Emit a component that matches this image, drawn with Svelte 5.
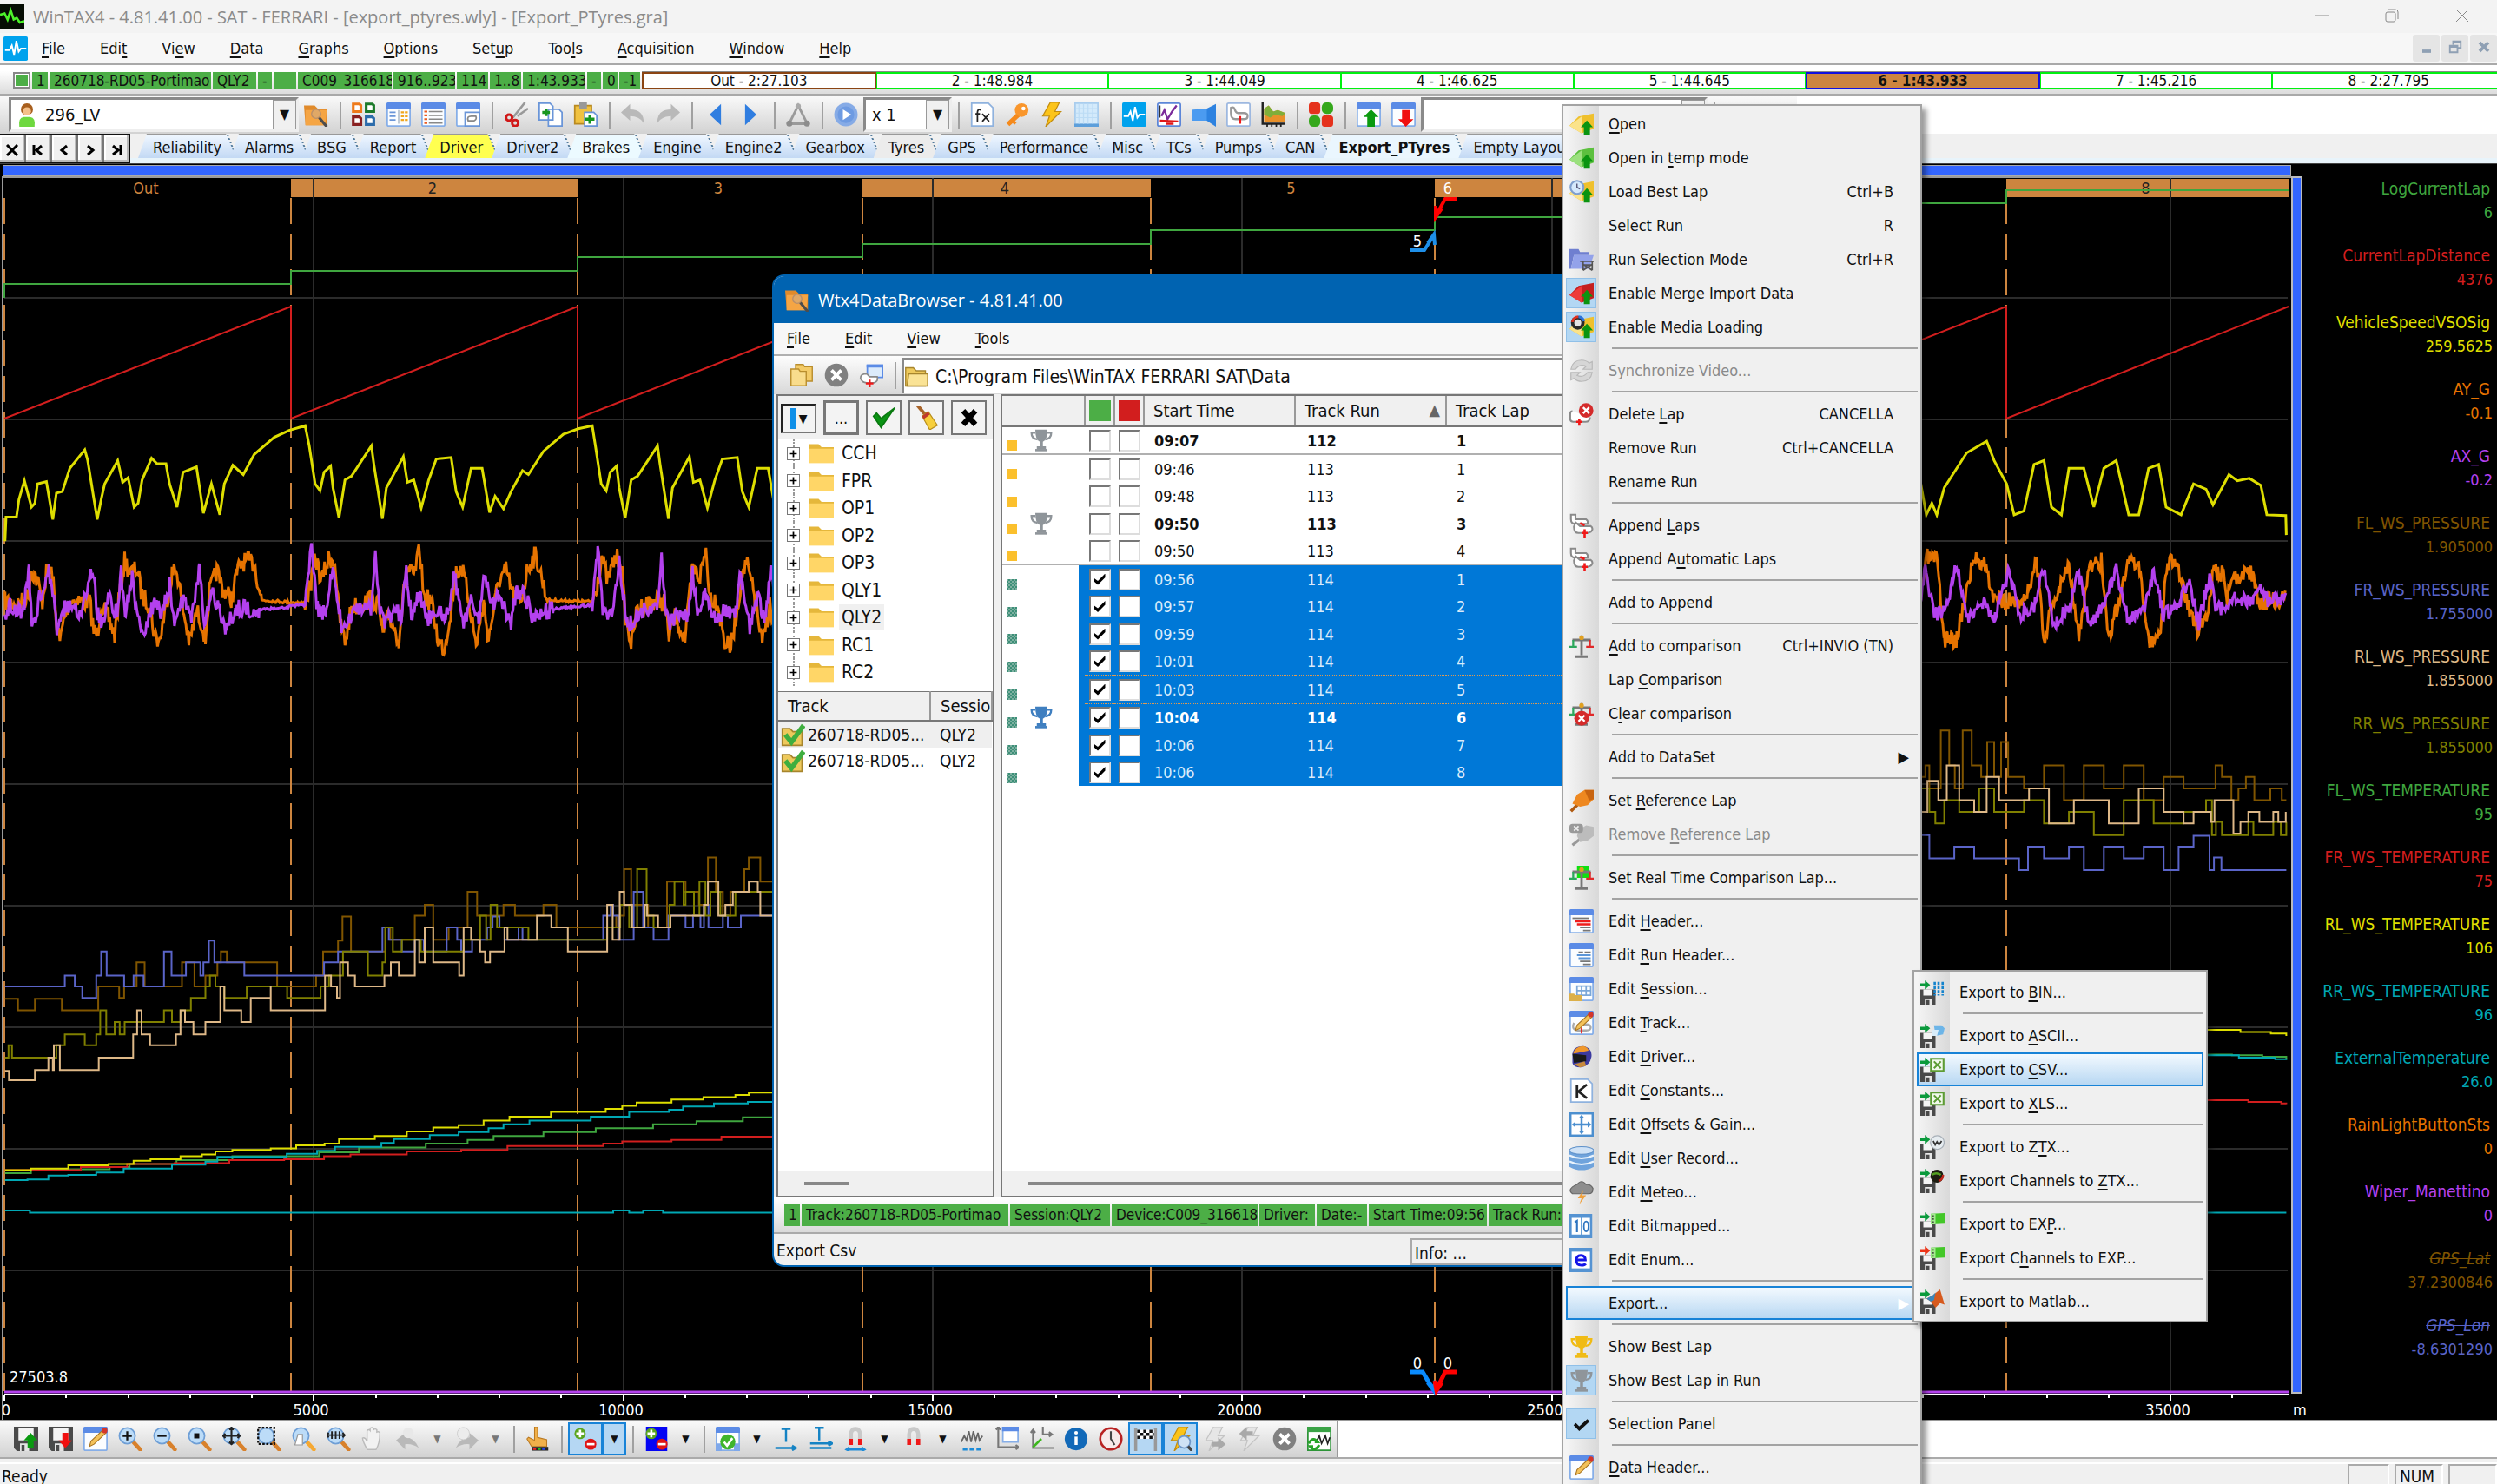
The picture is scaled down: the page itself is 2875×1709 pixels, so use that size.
<script lang="ts">
  type Pt = [number, number];
  type MenuItem = { label: string; icon?: string; keys?: string; off?: boolean; on?: boolean; active?: boolean; sub?: boolean } | null;

  // ---- icons, 16 x 16 ----
  const win = (body = "") =>
    `<rect x=".5" y=".5" width="15" height="15" rx="1" fill="#fbfdff" stroke="#86aee8"/><path d="M0 1q0-1 1-1h14q1 0 1 1v3H0z" fill="#5b8be6"/>${body}`;
  const lens = (body = "", handle = "#d8812c") =>
    `<path d="M9.5 9.500l5 5.500" stroke="${handle}" stroke-width="2.600" stroke-linecap="round"/><circle cx="6" cy="6" r="5.200" fill="#bcdcf8" stroke="#6f9fd6"/>${body}`;
  const disk = (body: string, arrow = "#0a9a3c") =>
    `<path d="M0 6h10v10H0z" fill="#4a4a4a"/><path d="M2 6h6v4H2z" fill="#f4f4f4"/><path d="M3 12h5v4H3z" fill="#e8e8e8"/><path d="M4 13h2v3H4z" fill="#4a4a4a"/><path d="M0 2h3V0l3.500 3L3 6V4H0z" fill="${arrow}"/>${body}`;
  const saveDisk = (arrow: string) =>
    `<path d="M0 0h16v16H2L0 14z" fill="#4a4a4a"/><path d="M3 1h10v8H3z" fill="#f4f4f4"/><path d="M4 11h6v5H4z" fill="#e4e4e4"/><path d="M5 12h2v4H5z" fill="#4a4a4a"/>${arrow}`;
  const greenUp = `<path d="M11.500 5.500l4 4.500h-2v5h-4v-5h-2z" fill="#0a9410"/>`;
  const cube = (light: string, dark: string) => `<path d="M0 9l6-6 10-2v10l-8 3z" fill="${dark}"/><path d="M0 9l8-6v11z" fill="${light}"/>`;
  const track = `<path d="M2 6q-1.500 0-1.500 2v3q0 2 2 2h8q3 0 3-3" fill="#fff" stroke="#8a8a8a" stroke-width="1.200"/>`;
  const scales = `<path d="M8 1v13M4 15h8M2 4h12" stroke="#777" stroke-width="1.600" fill="none"/><circle cx="8" cy="2.500" r="1.500" fill="#e0a020"/><path d="M0 8.500h5M2.500 4v4" stroke="#2ca85c" stroke-width="1.300"/><path d="M11 8.500h5M13.500 4v4" stroke="#e02828" stroke-width="1.300"/>`;
  const cross = (cx: number, cy: number, r: number, fill = "#d42a2a") =>
    `<circle cx="${cx}" cy="${cy}" r="${r}" fill="${fill}"/><path d="M${cx - r / 2.4} ${cy - r / 2.4}l${r / 1.2} ${r / 1.2}m0 ${-r / 1.2}l${-r / 1.2} ${r / 1.2}" stroke="#fff" stroke-width="${r / 3.5}"/>`;
  const cup = (fill: string) =>
    `<path d="M4 1h8q0 7-3 8v3h2v2H5v-2h2V9Q4 8 4 1z" fill="${fill}"/><path d="M4 3H1.500q0 4 4 4.500M12 3h2.500q0 4-4 4.500" stroke="${fill}" stroke-width="1.300" fill="none"/><path d="M4 14.500h8" stroke="${fill}" stroke-width="1.500"/>`;
  const pencil = `<path d="M4 13l1-3.500L13 2l2 2-8 7.500z" fill="#f3c25a" stroke="#a87420" stroke-width=".6"/><circle cx="14" cy="2.500" r="1.800" fill="#d4362a"/>`;
  const magnet = `<path d="M5 12V5q0-3.500 3-3.500T11 5v7" stroke="#c9c9c9" stroke-width="2.600" fill="none"/><path d="M3.700 8h2.600v4H3.700zM9.700 8h2.600v4H9.700z" fill="#f01818"/>`;
  const plusMinus = `<circle cx="4.500" cy="4.500" r="3.700" fill="#5aa51e"/><path d="M4.500 2v5M2 4.500h5" stroke="#fff" stroke-width="1.500"/><circle cx="11.500" cy="11.500" r="3.700" fill="#df1414"/><path d="M9 11.500h5" stroke="#fff" stroke-width="1.500"/>`;
  const bolt = (fill: string, edge: string) => `<path d="M7 0h6L10 6h4L4 16l2.500-7H2z" fill="${fill}" stroke="${edge}" stroke-width=".7"/>`;
  const sheet = (mark: string) => `<path d="M1 .500h11l3 3v12H1z" fill="#fff" stroke="#8fb2de"/>${mark}`;
  const xls = `<path d="M7 .700h8.300v8H7z" fill="#f2f9ec" stroke="#5d9c34" stroke-width="1.200"/><path d="M9 2.500l4.500 4.500M13.500 2.500L9 7" stroke="#5d9c34" stroke-width="1.200"/>`;
  const exp = `<path d="M7 1l9-.500v7L7 8z" fill="#43c728"/><path d="M7 1h3v7H7z" fill="#a5ea90"/><path d="M8.500 2v1m0 1v1m0 1v1" stroke="#333" stroke-width=".8"/>`;

  const icons: Record<string, string> = {
    app: `<rect width="16" height="16" fill="#060d04"/><path d="M0 7l3-1 2 4 2-6 2 6 2-1 2 3 3-1" stroke="#4cf22a" stroke-width="1.500" fill="none"/>`,
    pulse: `<rect width="16" height="16" rx="1" fill="#00a2ed"/><path d="M1 9h3l1.500-3L7 12l1.500-9L10 10l1.500-2H15" stroke="#fff" stroke-width="1.100" fill="none"/>`,
    user: `<circle cx="8" cy="4.500" r="4" fill="#a85f1e"/><circle cx="8" cy="5.800" r="2.700" fill="#f4c08a"/><path d="M3 16q-1-6 3-6.500h4q4 .5 3 6.500z" fill="#6ed83f"/>`,
    opener: `<path d="M0 2h7l2 2h6v11H1z" fill="#e08a2a"/><path d="M1 5h14l-1 10H1z" fill="#f5a544"/><circle cx="8" cy="7.500" r="3" fill="#e0a866" stroke="#b98f6a" stroke-width=".8"/><path d="M10 10l5 6" stroke="#4d4d4d" stroke-width="1.800"/>`,
    four: `<g fill="#fff" stroke-width="1.800"><path d="M1 1h4l1 1v4H1z" stroke="#ee7a1a"/><path d="M9.500 1h4l1 1v4h-5z" stroke="#1c7a2a"/><path d="M1 9.500h4l1 1v4H1z" stroke="#8a2020"/><path d="M9.500 9.500h4l1 1v4h-5z" stroke="#2c6cab"/></g>`,
    cols: win(`<path d="M8 5v9" stroke="#9ab" stroke-width=".7"/><path d="M2 6.500h4M2 9h4M2 11.500h4" stroke="#6a95d8"/><path d="M9.500 6.500h4.500M9.500 9h4.500M9.500 11.500h4.500" stroke="#f0a820" stroke-width="1.400" stroke-dasharray="2 .6"/>`),
    rows: win(`<path d="M5 6h9M5 8.500h9M5 11h9M5 13.500h9" stroke="#888" stroke-width=".9"/><path d="M2 6h2M2 8.500h2M2 11h2M2 13.500h2" stroke="#ec5b20" stroke-width="1.200"/>`),
    winTrack: `${win()}<path d="M6 6.500h9.500v9H6z" fill="#fff" stroke="#6a95d8"/><path d="M8 12q-1-3 2-3h3q1 2-1 3z" fill="none" stroke="#888"/>`,
    cut: `<path d="M14 0L6 10M9 9L16 4" stroke="#999" stroke-width="1.500"/><circle cx="3.500" cy="10" r="2" fill="none" stroke="#d01818" stroke-width="1.700"/><circle cx="7.500" cy="13.500" r="2" fill="none" stroke="#d01818" stroke-width="1.700"/>`,
    copy: `<path d="M.5.500h7l2 2v9h-9zM6.500 4.500h7l2 2v9h-9z" fill="#fff" stroke="#6a95d8"/><path d="M5 4v5M2.500 6.500h5" stroke="#18961f" stroke-width="2"/>`,
    paste: `<path d="M1 2h11v12H1z" fill="#f0c240" stroke="#b98a20"/><path d="M4 0h5v4H4z" fill="#999"/><path d="M7.500 6.500h6l2 2v7h-8z" fill="#fff" stroke="#6a95d8"/><path d="M11 8v6M8 11h6" stroke="#18961f" stroke-width="2"/>`,
    undo: `<path d="M0 6.500L6 1v3.500q9 0 9 9-3-4.500-9-4.500V12z" fill="#b9b9b9"/>`,
    redo: `<path d="M16 6.500L10 1v3.500q-9 0-9 9 3-4.500 9-4.500V12z" fill="#b9b9b9"/>`,
    prev: `<path d="M11.500 1v14L4 8z" fill="#2f7de0"/>`,
    next: `<path d="M4.500 1v14L12 8z" fill="#2f7de0"/>`,
    tri: `<path d="M8 2L2 14h12z" fill="none" stroke="#9a9a9a" stroke-width="1.600"/><circle cx="8" cy="2.500" r="1.800" fill="#aaa"/><circle cx="2.200" cy="13.800" r="2" fill="#8d8d8d"/><circle cx="13.800" cy="13.800" r="2" fill="#8d8d8d"/>`,
    play: `<circle cx="8" cy="8" r="7.700" fill="#86abe6"/><circle cx="8" cy="8" r="5.500" fill="#6e9be2"/><path d="M6 4.500v7L11.500 8z" fill="#fff"/>`,
    fx: sheet(`<path d="M7 5q-2-1-2.200 1.500V13M3.500 7.500h3M8 7.500l4.500 5M12.500 7.500l-4.500 5" stroke="#222" fill="none"/>`),
    key: `<path d="M9 8l-7 6.500" stroke="#f58a1c" stroke-width="3"/><path d="M5 12l2 2" stroke="#f58a1c" stroke-width="2"/><circle cx="11" cy="5" r="4.500" fill="#f9962c"/><circle cx="12.200" cy="4" r="1.300" fill="#fff"/>`,
    bolt: bolt("#fcc419", "#c28c10"),
    mesh: `<rect x=".5" y=".5" width="15" height="14" fill="#d3eafb" stroke="#a9cdee"/><path d="M0 15h16" stroke="#5d9fdb" stroke-width="2"/><path d="M3 1v13M6 1v13M9 1v13M12 1v13M1 4h14M1 7h14M1 10h14" stroke="#bcdcf5" stroke-width=".7"/>`,
    scatter: `<rect x=".5" y=".5" width="15" height="15" rx="1" fill="#fff" stroke="#5c86d8"/><path d="M3 9l2-4 2 6 3-5 3-4" stroke="#7a2a9a" stroke-width="1.300" fill="none"/><path d="M2 12l12 .5M6 14h5" stroke="#e01818" stroke-width="1.400"/><path d="M2 2v8" stroke="#333" stroke-width=".8"/>`,
    area: `<path d="M0 5l10-1 6-3v15l-6-4H0z" fill="#2d82e0"/><path d="M0 5l10-1v8H0z" fill="#4b9bf0"/>`,
    circuit: `<rect x=".5" y=".5" width="15" height="15" rx="1" fill="#fff" stroke="#9db8e0"/><path d="M3 3.500q2-1 2.500 1t2 2.500h4q2.500 0 2.500 2t-2 2H6Q3 11 3 7z" fill="none" stroke="#999" stroke-width="1.300"/><path d="M9 9v5" stroke="#f01818" stroke-width="1.500"/>`,
    histo: `<path d="M1 0v14h15" stroke="#222" stroke-width="1.400" fill="none"/><path d="M2 4l3-2 3 4 3-1 5 2v6H2z" fill="#e8902a"/><path d="M2 4l3-2 3 4 3-1 5 2-2 2-5-1-3 2-4-2z" fill="#7fae3a"/><path d="M4 14v2m3-2v2m3-2v2m3-2v2" stroke="#222"/>`,
    dice: `<rect width="7.500" height="7.500" rx="2" fill="#e5321c"/><rect x="8.500" width="7.500" height="7.500" rx="3" fill="#35a81c"/><rect y="8.500" width="7.500" height="7.500" rx="3" fill="#35a81c"/><rect x="8.500" y="8.500" width="7.500" height="7.500" rx="2" fill="#e5321c"/>`,
    winUp: win(`<path d="M9.500 4.500l5 5H12V16H7V9.500H4.500z" fill="#0a9a10"/>`),
    winDown: win(`<path d="M9.500 16l5-5H12V5H7v6H4.500z" fill="#f01010"/>`),

    cube: cube("#fbe38a", "#efc02c") + greenUp,
    cubeGreen: cube("#9be07e", "#5cc03e") + greenUp,
    best: cube("#fbe38a", "#efc02c") + `<circle cx="5" cy="5" r="4.300" fill="#d5e8fb" stroke="#7f9fce" stroke-width="1.200"/><path d="M5 2.500V5l2 1" stroke="#557" fill="none" stroke-width=".8"/>` + greenUp,
    runSel: `<path d="M0 1h6l1 2h6v2H3L1 14H0z" fill="#6f7fd0"/><path d="M3 5h13l-3 9H1z" fill="#93a2ea"/><path d="M7 9h9M8 11.500h7M9 9v6m6-6v6m-6 0l6-4m-6 0l6 4" stroke="#555" stroke-width="1"/>`,
    merge: cube("#ee3a3a", "#c41f1f") + greenUp,
    media: cube("#fbe38a", "#efc02c") + `<circle cx="5.500" cy="5" r="4.500" fill="#2a2a2a"/><path d="M2 4.500A4 4 0 0 1 6 1" stroke="#e03020" stroke-width="1.700" fill="none"/><path d="M6 1a4 4 0 0 1 3.500 3" stroke="#2d74d8" stroke-width="1.700" fill="none"/><circle cx="5.500" cy="5" r="2.300" fill="#e4e4e4"/>` + greenUp,
    sync: `<path d="M1 7q1-6 7-6 3 0 5 2l2-1v5h-6l2-2q-4-2-7 2zM15 9q-1 6-7 6-3 0-5-2l-2 1V9h6l-2 2q4 2 7-2z" fill="#d6d6d6" stroke="#b9b9b9" stroke-width=".7"/>`,
    delLap: `${track}<path d="M6.500 11v4.500M4.500 13h4" stroke="#f01818" stroke-width="1.500"/>${cross(11, 5.5, 4.8)}`,
    append: `<path d="M1 1h3v3h7q1.500 1 1 3H4Q1 7 1 4z" fill="#fff" stroke="#8a8a8a" stroke-width="1.200"/><path d="M4 6l3 2.500h7q1.500 1 1 2.500t-3 2H6q-3 0-3-4z" fill="#fff" stroke="#8a8a8a" stroke-width="1.200"/><path d="M10 10.500V16M8 13h4M7 6.500l3 1.500" stroke="#f01818" stroke-width="1.500"/>`,
    scales,
    scalesOff: scales + cross(8, 11, 4.8),
    pin: `<path d="M1 15l5-5" stroke="#b05a10" stroke-width="2"/><path d="M5 4l5-3 6 0v6l-4 4-5 1-5-2z" fill="#ee8820"/><path d="M10 1h6v6l-3 1z" fill="#c86410"/>`,
    pinOff: `<path d="M2 15l5-4" stroke="#999" stroke-width="2"/><path d="M6 5l5-3 5 1v6l-4 3-5 1-2-4z" fill="#bcbcbc"/><rect x="0" y="1" width="9" height="6" rx="2" fill="#999"/><path d="M3 2.500l3 3m0-3l-3 3" stroke="#eee"/>`,
    realTime: `<rect x="5" y="0" width="8" height="8" fill="#10e010"/>${scales}`,
    header: win(`<path d="M2 6h11" stroke="#777"/><path d="M4 8h10M5 10h9" stroke="#ee1c1c" stroke-width="1.300"/><path d="M7 12h7M9 14h5" stroke="#777"/>`),
    runHeader: win(`<path d="M6 6h3m1 0h4" stroke="#777"/><path d="M5 8h9M6 10h8" stroke="#5b96d8" stroke-width="1.100"/><path d="M7 12h7M9 14h5" stroke="#777"/>`),
    session: win(`<path d="M5 6h9v6H5zM8 6v6M11 6v6M5 9h9" stroke="#7ba7d8" fill="none"/><path d="M0 11h3l1 1h4v4H0z" fill="#dcb04a"/>`),
    editTrack: win(`<path d="M3 8q-2 4 2 5h6q3 0 3-2t-3-2H8" fill="none" stroke="#aaa" stroke-width="1.300"/><path d="M8 11v4" stroke="#f01818"/>`) + pencil,
    helmet: `<path d="M2 7q0-6 7-6 6 1 5.500 7-1 6-7 7-5 0-5.500-3z" fill="#3c3aa0"/><path d="M2.500 6q1-5 7-5 3 1 3 3z" fill="#f0982c"/><path d="M2 6l9 1v4l-8 1z" fill="#191919"/><path d="M3 13l7-2 1 3-4 1z" fill="#c88a3c"/>`,
    constK: sheet(`<path d="M5 4v9M11.500 4L6 8.500l5.500 4.500" stroke="#222" stroke-width="1.600" fill="none"/>`),
    offsets: `<rect x=".7" y=".7" width="14.600" height="14.600" fill="#fff" stroke="#4c8fcf" stroke-width="1.400"/><path d="M8 3v10M3 8h10" stroke="#4c8fcf" stroke-width="1.400"/><path d="M8 1.500l2 2.500H6zM8 14.500L6 12h4zM1.500 8L4 6v4zM14.500 8L12 10V6z" fill="#4c8fcf"/>`,
    db: `<path d="M0 2.500v11Q8 18 16 13.500v-11z" fill="#6fa3dc"/><path d="M0 6q8 4 16 0M0 10q8 4 16 0" stroke="#eaf3fc" stroke-width="1.200" fill="none"/><ellipse cx="8" cy="2.800" rx="8" ry="2.500" fill="#cfe2f6" stroke="#5c8fc8" stroke-width=".6"/>`,
    meteo: `<path d="M2 9q-3-2 0-4.500Q4 3 5 3q3-4 6 0 3-.5 4.500 2.500 0 3.500-3 3.500z" fill="#8e8e8e" stroke="#666" stroke-width=".7"/><path d="M9 7L5.500 12H8l-1.500 4L11 10H8.500z" fill="#f0a03c"/>`,
    bitmap: `<rect width="15" height="16" fill="#5593d2"/><path d="M1.500 2.500h6v11h-6zM8.500 2.500h5v11h-5z" fill="#fff"/><path d="M3.500 5.500l1.500-1V12" stroke="#2f75c0" stroke-width="1.200" fill="none"/><ellipse cx="11" cy="8.200" rx="1.500" ry="3.300" stroke="#2f75c0" fill="none"/>`,
    enum: `<rect width="15" height="16" fill="#5593d2"/><rect x="1.500" y="2.500" width="12" height="11" fill="#fff"/><path d="M4.500 8h6q0-3-3-3t-3 3.200T8 11.500q2 0 2.700-1" stroke="#1414e8" stroke-width="1.700" fill="none"/>`,
    cup: cup("#f0bb14"),
    cupGrey: cup("#8f959a"),
    cupBlue: cup("#3f7fc0"),
    check: `<path d="M3.500 8l3 3L12.500 5.500" stroke="#111" stroke-width="2.200" fill="none"/>`,
    edit: win() + pencil,

    bin: disk(`<path d="M9.500 1v9M12 1v9M14.700 1v9" stroke="#1583cc" stroke-width="1.500" stroke-dasharray="2 .7"/>`),
    ascii: disk(`<path d="M9 1h5l2 2-1 4-5 1z" fill="#6db5e8"/><path d="M8 4h4l-1 4H8z" fill="#d9edfa"/>`),
    csv: disk(xls),
    ztx: disk(`<circle cx="11.200" cy="5" r="4.500" fill="#e6ecf0" stroke="#a8b0b8" stroke-width=".7"/><path d="M8.500 4l1.300 2.500L11 4.500l1.300 2L14 4" stroke="#333" fill="none"/>`),
    chZtx: disk(`<circle cx="11" cy="4.800" r="4.300" fill="#1d1d10"/><path d="M7.500 4q3-2 6 0" stroke="#54a020" stroke-width="1.300" fill="none"/><path d="M12 8q3-1 3-4" stroke="#c0261a" stroke-width="1.400" fill="none"/>`),
    exp: disk(exp),
    chExp: disk(exp, "#ec3418"),
    matlab: disk(`<path d="M4 6l4-2 5-4 3 10-3-1-3 3-3-4z" fill="#d65a1e"/><path d="M4 6l4-2 2-2-1 5-2 1z" fill="#3c86b8"/>`),

    saveUp: saveDisk(`<path d="M11 4l4.500 5H13v5H9V9H6.500z" fill="#0a9a10"/>`),
    saveDown: saveDisk(`<path d="M11 14l4.500-5H13V4H9v5H6.500z" fill="#f01010"/>`),
    zoomIn: lens(`<path d="M6 3v6M3 6h6" stroke="#111" stroke-width="1.300"/>`),
    zoomOut: lens(`<path d="M3 6h6" stroke="#111" stroke-width="1.300"/>`),
    zoomOne: lens(`<path d="M4.300 4.300h3.400v3.400H4.300z" fill="#111"/>`),
    zoomAll: lens(`<path d="M6 0v12M0 6h12M4.500 2L6 .500 7.500 2M4.500 10L6 11.500 7.500 10M2 4.500L.500 6 2 7.500M10 4.500L11.500 6 10 7.500" stroke="#222" stroke-width="1.200" fill="none"/>`),
    zoomBox: lens(`<rect x=".7" y=".7" width="10.600" height="10.600" fill="none" stroke="#111" stroke-width="1.300" stroke-dasharray="1.500 1"/>`),
    zoomHand: lens(`<path d="M4 5l3 0v7H2z" fill="#fff" stroke="#999" stroke-width=".7"/>`, "#f5a832"),
    zoomX: lens(`<path d="M0 5.500h12M3.500 3v5M6 3v5M8.500 3v5M1.500 4L0 5.500 1.500 7M10.500 4L12 5.500 10.500 7" stroke="#222" stroke-width="1.100" fill="none"/>`),
    hand: `<path d="M4 15Q1 10 .8 7.500q1.500-.8 3 2V2.500q1.300-1 2 0V1q1.300-1 2.200 0v1q1.200-1 2.200 0v1.500q1.300-.7 2 .5 0 7-2.500 11z" fill="#f2f2f2" stroke="#bbb" stroke-width=".8"/>`,
    back: `<path d="M0 9l6-5v3q6 0 9 7-4-3-9-2.500V15z" fill="#b9b9b9"/><circle cx="8" cy="4" r="3.500" fill="#e8e8e8"/>`,
    forth: `<path d="M16 9l-6-5v3q-6 0-9 7 4-3 9-2.500V15z" fill="#b9b9b9"/><circle cx="6" cy="4.500" r="4" fill="#ececec" stroke="#ccc" stroke-width=".5"/>`,
    point: `<path d="M6 0h2v7l6 1.500V13H4L1 8l1-1 4 2z" fill="#f0b04a" stroke="#b97820" stroke-width=".6"/><path d="M4 14.500h11" stroke="#222" stroke-width="2.500"/><path d="M5 14.500h2" stroke="#e22" stroke-width="1.600"/><path d="M8 14.500h2" stroke="#2c2" stroke-width="1.600"/><path d="M11 14.500h2" stroke="#24e" stroke-width="1.600"/>`,
    pm: plusMinus,
    pmBlue: `<rect x="1" y="0" width="14" height="16" fill="#0404f4"/>${plusMinus}`,
    okCal: win(`<path d="M0 11h4v5H0zM12 11h4v5h-4z" fill="#7fa8ea"/><circle cx="8" cy="10" r="5" fill="#3fb52c"/><path d="M5.500 10l2 2.500 3.500-5" stroke="#fff" stroke-width="1.500" fill="none"/>`),
    t1: `<path d="M5 1.500h6M8 1.500V10M1 14h13M12 12.500L14.500 14 12 15.500" stroke="#1583c4" stroke-width="1.400" fill="none"/>`,
    t2: `<path d="M4 .700h6M7 .700V9M1 11h14M1 14h14M13 9.500L15.500 11 13 12.500" stroke="#1583c4" stroke-width="1.400" fill="none"/>`,
    magnet,
    magnetX: magnet + `<path d="M2 15h12M4 13.500L2 15l2 1M12 13.500l2 1.500-2 1" stroke="#1c8bd8" stroke-width="1.300" fill="none"/>`,
    wave: `<path d="M1 10l2-4 1.500 3L6 3l1.500 7L9 3l1.500 6L12 4l1 5 2-3" stroke="#666" fill="none"/><path d="M2 15h12" stroke="#1c8bd8" stroke-width="1.500" stroke-dasharray="3 1.500"/>`,
    axes: `<path d="M2.500 0v13.500H16M1 2l1.500-2L4 2M14 12l2 1.500-2 1.500" stroke="#777" stroke-width="1.200" fill="none"/><path d="M5.500.500h10v9.500h-10z" fill="#fff" stroke="#86aee8"/><path d="M5 0h11v3H5z" fill="#5b8be6"/>`,
    axes2: `<path d="M2.500 2v12H16M1 4l1.500-2L4 4M9 0v5h6M13 3.500L15 5l-2 1.500" stroke="#777" stroke-width="1.200" fill="none"/><path d="M2.500 13.500L8 8" stroke="#3cb81c" stroke-width="1.500"/>`,
    info: `<circle cx="8" cy="8" r="7.500" fill="#1269b8"/><path d="M8 6.500V12" stroke="#fff" stroke-width="2"/><circle cx="8" cy="4" r="1.200" fill="#fff"/>`,
    clock: `<circle cx="8" cy="8" r="7" fill="#f7eaea" stroke="#b82222" stroke-width="1.500"/><path d="M8 3v5l2.500 4" stroke="#444" stroke-width="1.200" fill="none"/>`,
    flag: `<path d="M1.500 1v15M14.500 1v15" stroke="#999" stroke-width="2"/><path d="M2.500 2h11v6h-11z" fill="#fff"/><path d="M2.500 3h11M2.500 7h11" stroke="#111" stroke-width="2" stroke-dasharray="2 2"/><path d="M4.500 5h9" stroke="#111" stroke-width="2" stroke-dasharray="2 2"/>`,
    boltLens: bolt("#fcc419", "#c28c10") + `<circle cx="10.500" cy="10" r="4" fill="#cfe2f5" stroke="#6f97c8"/><path d="M13 13l3 3" stroke="#444" stroke-width="2"/>`,
    boltR: bolt("#e6e6e6", "#c4c4c4") + `<path d="M6 10h4V7l5 4.500-5 4V13H6z" fill="#a9a9a9"/>`,
    boltL: bolt("#e6e6e6", "#c4c4c4") + `<path d="M10 3H6V0L1 4.500 6 9V6h4z" fill="#a9a9a9"/>`,
    stop: cross(8, 8, 7.6, "#808080"),
    monitor: `<rect x=".5" y=".5" width="15" height="15" fill="#fff" stroke="#2d9438"/><path d="M0 0h16v3.500H0z" fill="#3aa346"/><path d="M6 10l2-4 1.500 5L12 6l1.500 5L15 7" stroke="#222" fill="none"/><path d="M1 11q3-5 6-1l-2 0M8 12q-3 5-6 1l2 0" stroke="#28a428" stroke-width="1.700" fill="none"/>`,

    folders: `<path d="M4 1h5l1 1.500h5V12H4z" fill="#f3cb68" stroke="#b98d2c" stroke-width=".8"/><path d="M1 4h5l1 1.500h4V15H1z" fill="#f9dc8c" stroke="#b98d2c" stroke-width=".8"/>`,
    winCar: `<path d="M5.500 1.500h10v8h-10z" fill="#dcebfb" stroke="#5b8be6"/><path d="M5 1h11v2H5z" fill="#5b8be6"/><path d="M5 7Q1 7 1 10q1 3 4 3h5q3-1 2-4H7z" fill="#fff" stroke="#8a8a8a"/><path d="M7 11v5M4.500 13.500h5" stroke="#f01818" stroke-width="1.400"/>`,
    folder: `<path d="M0 2h6l2 2h8v10H0z" fill="#e5b73b"/><path d="M0 5h16v9.500H0z" fill="#ffd667"/>`,
    folderOpen: `<path d="M1 2h5l2 2h6v10H1z" fill="#eec95c" stroke="#a7852c" stroke-width=".8"/><path d="M3 6h12.500v8H2z" fill="#fae396" stroke="#a7852c" stroke-width=".8"/>`,
    tick: `<path d="M1 7l5 7.500L15 1.500 6 8.500 3 5z" fill="#0a9414" stroke="#0a7a10"/>`,
    broom: `<path d="M2 0l5 6" stroke="#a8642a" stroke-width="2.200"/><path d="M5 7l4-3 6 9-5 3z" fill="#f7cf3c" stroke="#b88d1c" stroke-width=".7"/><path d="M5 7l4-3 1 2-4 3z" fill="#c0392b"/>`,
    bigX: `<path d="M4 3.500l8 9M12 3.500l-8 9" stroke="#000" stroke-width="3.500"/>`,
    loaded: `<path d="M1 4h5l2 2h6v9H1z" fill="#eec95c" stroke="#a7852c"/><path d="M3 8l4 5 8-11" stroke="#3fae3f" stroke-width="3.200" fill="none"/>`,
  };

  // ---- chrome data; ^ marks the mnemonic letter ----
  const mainMenu = ["^File", "Edi^t", "Vi^ew", "^Data", "^Graphs", "^Options", "Set^up", "Too^ls", "^Acquisition", "^Window", "^Help"];
  const runCells: [string, number][] = [["1", 18], ["260718-RD05-Portimao", 186], ["QLY2", 50], ["-", 16], ["", 26], ["C009_316618", 108], ["916..923", 71], ["114", 36], ["1..8", 36], ["1:43.933", 72], ["-", 16], ["0", 17], ["-1", 24]];
  const laps = ["Out - 2:27.103", "2 - 1:48.984", "3 - 1:44.049", "4 - 1:46.625", "5 - 1:44.645", "6 - 1:43.933", "7 - 1:45.216", "8 - 2:27.795"];
  const toolsA = ["opener", "|", "four", "cols", "rows", "winTrack", "|", "cut", "copy", "paste", "|", "undo", "redo", "|", "prev", "next", "|", "tri", "|", "play"];
  const toolsB = ["|", "fx", "key", "bolt", "mesh", "|", "pulse", "scatter", "area", "circuit", "histo", "|", "dice", "|", "winUp", "winDown"];
  const toolsC = ["saveUp", "saveDown", "edit", "zoomIn", "zoomOut", "zoomOne", "zoomAll", "zoomBox", "zoomHand", "zoomX", "hand", "back", "v", "forth", "v", "|", "point", "|", "+pm", "+V", "|", "pmBlue", "V", "|", "okCal", "V", "t1", "t2", "magnetX", "V", "magnet", "V", "wave", "axes", "axes2", "info", "clock", "+flag", "+boltLens", "boltR", "boltL", "stop", "monitor"];
  const tabs = ["Reliability", "Alarms", "BSG", "Report", "Driver", "Driver2", "Brakes", "Engine", "Engine2", "Gearbox", "Tyres", "GPS", "Performance", "Misc", "TCs", "Pumps", "CAN", "Export_PTyres", "Empty Layout"];

  const channels: [string, string, string][] = [
    ["LogCurrentLap", "6", "#3fa63f"], ["CurrentLapDistance", "4376", "#d21e1e"], ["VehicleSpeedVSOSig", "259.5625", "#dede00"],
    ["AY_G", "-0.1", "#e67300"], ["AX_G", "-0.2", "#b441ee"], ["FL_WS_PRESSURE", "1.905000", "#805500"],
    ["FR_WS_PRESSURE", "1.755000", "#5a64c8"], ["RL_WS_PRESSURE", "1.855000", "#deb887"], ["RR_WS_PRESSURE", "1.855000", "#808000"],
    ["FL_WS_TEMPERATURE", "95", "#3fa63f"], ["FR_WS_TEMPERATURE", "75", "#d21e1e"], ["RL_WS_TEMPERATURE", "106", "#dede00"],
    ["RR_WS_TEMPERATURE", "96", "#00a8b4"], ["ExternalTemperature", "26.0", "#00a8b4"], ["RainLightButtonSts", "0", "#e67300"],
    ["Wiper_Manettino", "0", "#b441ee"], ["GPS_Lat", "37.2300846", "#805500"], ["GPS_Lon", "-8.6301290", "#5a64c8"],
  ];

  const context: MenuItem[] = [
    { label: "^Open", icon: "cube" }, { label: "Open in ^temp mode", icon: "cubeGreen" }, { label: "Load Best Lap", icon: "best", keys: "Ctrl+B" },
    { label: "Select Run", keys: "R" }, { label: "Run Selection Mode", icon: "runSel", keys: "Ctrl+R" },
    { label: "Enable Merge Import Data", icon: "merge", on: true }, { label: "Enable Media Loading", icon: "media", on: true }, null,
    { label: "Synchronize Video...", icon: "sync", off: true }, null,
    { label: "Delete ^Lap", icon: "delLap", keys: "CANCELLA" }, { label: "Remove Run", keys: "Ctrl+CANCELLA" }, { label: "Rename Run" }, null,
    { label: "Append ^Laps", icon: "append" }, { label: "Append A^utomatic Laps", icon: "append" }, null,
    { label: "Add to Append" }, null,
    { label: "^Add to comparison", icon: "scales", keys: "Ctrl+INVIO (TN)" }, { label: "Lap ^Comparison" }, { label: "C^lear comparison", icon: "scalesOff" }, null,
    { label: "Add to DataSet", sub: true }, null,
    { label: "Set ^Reference Lap", icon: "pin" }, { label: "Remove ^Reference Lap", icon: "pinOff", off: true }, null,
    { label: "Set Real Time Comparison Lap...", icon: "realTime" }, null,
    { label: "Edit ^Header...", icon: "header" }, { label: "Edit ^Run Header...", icon: "runHeader" }, { label: "Edit ^Session...", icon: "session" },
    { label: "Edit ^Track...", icon: "editTrack" }, { label: "Edit ^Driver...", icon: "helmet" }, { label: "Edit ^Constants...", icon: "constK" },
    { label: "Edit ^Offsets & Gain...", icon: "offsets" }, { label: "Edit ^User Record...", icon: "db" }, { label: "Edit ^Meteo...", icon: "meteo" },
    { label: "Edit Bitmapped...", icon: "bitmap" }, { label: "Edit Enum...", icon: "enum" }, null,
    { label: "Export...", active: true, sub: true }, null,
    { label: "Show Best Lap", icon: "cup" }, { label: "Show Best Lap in Run", icon: "cupGrey", on: true }, null,
    { label: "Selection Panel", icon: "check", on: true }, null,
    { label: "^Data Header...", icon: "edit" },
  ];
  const exports: MenuItem[] = [
    { label: "Export to ^BIN...", icon: "bin" }, null,
    { label: "Export to ^ASCII...", icon: "ascii" }, { label: "Export to ^CSV...", icon: "csv", active: true }, { label: "Export to ^XLS...", icon: "csv" }, null,
    { label: "Export to Z^TX...", icon: "ztx" }, { label: "Export Channels to ^ZTX...", icon: "chZtx" }, null,
    { label: "Export to EX^P...", icon: "exp" }, { label: "Export C^hannels to EXP...", icon: "chExp" }, null,
    { label: "Export to Matlab...", icon: "matlab" },
  ];

  const sessions = ["CCH", "FPR", "OP1", "OP2", "OP3", "QLY1", "QLY2", "RC1", "RC2"];
  const rows = [
    ["09:07", "112", "1"], ["09:46", "113", "1"], ["09:48", "113", "2"], ["09:50", "113", "3"], ["09:50", "113", "4"],
    ["09:56", "114", "1"], ["09:57", "114", "2"], ["09:59", "114", "3"], ["10:01", "114", "4"], ["10:03", "114", "5"],
    ["10:04", "114", "6"], ["10:06", "114", "7"], ["10:06", "114", "8"],
  ];
  const bestRows = [0, 3, 10];
  const footCells: [string, number][] = [["1", 18], ["Track:260718-RD05-Portimao", 238], ["Session:QLY2", 115], ["Device:C009_316618", 168], ["Driver:", 64], ["Date:-", 58], ["Start Time:09:56", 136], ["Track Run:114", 120]];

  // ---- graph ----
  const bounds = [5, 335, 665, 993, 1325, 1652, 1981, 2310, 2635];
  const lapNames = ["Out", "2", "3", "4", "5", "", "", "8"];
  const lapY = [327, 312, 296, 281, 265, 250, 234, 219];
  const majors = [0, 1, 2, 3, 4, 5, 6, 7];
  const minors = Array.from({ length: 37 }, (_, i) => i);
  const toX = (x: number) => Math.round(x * 5.74) / 10;
  const toY = (y: number) => 200 + Math.round(y * 8.93) / 10;
  const pairs = (s: string): Pt[] => s.split(" ").map((p) => p.split(",").map(Number) as Pt);
  const shift = (pts: Pt[], dx: number): Pt[] => pts.map(([x, y]) => [x + dx, y]);
  const line = (pts: Pt[]) => "M" + pts.map(([x, y]) => `${toX(x)} ${toY(y)}`).join("L");
  const step = (pts: Pt[]) => pts.map(([x, y], i) => (i ? `H${toX(x)}V${toY(y)}` : `M${toX(x)} ${toY(y)}`)).join("");

  // long spans are straights, where the signal is nearly flat
  const noisy = (pts: Pt[], amp: number, seed: number) => {
    const out: Pt[] = [];
    let s = seed;
    for (let i = 0; i < pts.length - 1; i++) {
      const [x0, y0] = pts[i];
      const [x1, y1] = pts[i + 1];
      const quiet = x1 - x0 > 70 ? 0.15 : 1;
      for (let x = x0; x < x1; x += 2) {
        s = (s * 16807) % 2147483647;
        out.push([x, y0 + ((y1 - y0) * (x - x0)) / (x1 - x0) + (s / 2147483647 - 0.5) * amp * quiet]);
      }
    }
    return out;
  };

  const lapLine = "M5 343" + lapY.map((y, i) => `V${y}H${bounds[i + 1]}`).join("");
  const distLine = "M5 482" + bounds.slice(1).map((x) => `L${x} 353V482`).join("").replace(/V482$/, "");

  const speedOut = pairs("10,474 12,443 33,443 38,420 49,396 63,430 70,425 75,400 93,397 106,446 113,412 125,410 140,380 170,356 176,370 195,446 203,420 210,400 236,370 246,398 257,392 269,430 277,425 285,395 304,367 315,374 333,374 340,400 355,430 367,385 394,378 408,438 424,400 441,440 450,400 467,376 488,388 510,362 550,340 580,331 612,325");
  const speedLap = pairs("620,350 632,400 642,409 650,385 663,377 668,405 680,444 692,395 705,390 745,351 750,375 767,445 775,405 809,365 817,398 830,395 845,431 860,395 875,368 905,366 915,410 928,430 945,380 967,380 982,437 993,416 1010,432 1025,410 1048,383 1060,388 1090,358 1130,336 1160,329 1188,325");
  const speedEnd = pairs("3853,400 3864,440 3875,425 3885,440 3900,405 3915,390 3945,360 3985,345 4000,370 4025,400 4040,440 4060,435 4080,375 4100,370 4115,430 4135,440 4150,380 4180,380 4200,430 4220,380 4245,370 4270,440 4290,440 4310,380 4330,375 4345,430 4375,440 4400,400 4425,407 4439,427 4471,388 4488,396 4512,393 4535,402 4547,440 4585,441 4586,466");
  const ayOut = pairs("10,552 40,555 55,545 63,510 75,525 85,550 93,515 105,515 112,570 120,605 128,575 140,550 180,552 188,590 195,595 203,555 218,575 230,595 240,540 250,500 262,515 275,510 285,545 300,555 310,595 320,603 332,560 345,515 355,510 365,555 380,605 395,565 405,580 412,600 420,540 435,512 450,540 465,548 475,515 487,500 510,502 525,550 612,554");
  const ayLap = pairs("625,525 633,495 645,525 660,495 672,500 680,570 692,605 705,560 740,550 758,552 768,595 780,570 800,600 815,510 830,520 842,485 850,545 865,552 880,605 892,612 905,560 915,515 925,505 940,548 955,608 970,555 980,600 1000,525 1015,512 1030,545 1045,550 1060,505 1075,492 1098,550 1188,552");
  const axOut = pairs("10,580 20,555 45,570 58,515 65,585 80,545 98,515 110,560 115,595 130,560 165,565 180,510 187,515 195,565 205,580 218,545 235,570 243,515 252,570 265,515 275,575 290,590 310,550 325,570 340,530 350,575 370,545 385,575 400,510 410,575 425,540 440,560 452,585 475,560 520,563 612,556");
  const axLap = pairs("625,480 635,560 655,570 668,500 685,585 710,565 745,562 753,495 760,555 770,580 790,565 805,570 815,515 825,570 840,540 855,575 880,565 900,570 912,515 922,560 930,585 945,545 960,575 972,515 985,560 1000,545 1025,580 1035,540 1055,545 1065,570 1110,562 1188,556");
  const ayEnd = pairs("3850,550 3866,495 3885,500 3900,600 3925,600 3940,550 3960,495 3980,500 4000,550 4060,552 4085,500 4100,600 4120,550 4150,500 4170,600 4190,510 4215,500 4230,600 4250,550 4270,500 4290,510 4310,600 4330,600 4350,500 4370,510 4390,560 4410,590 4430,560 4439,515 4460,515 4468,548 4478,520 4515,515 4530,550 4548,552 4586,548");
  const axEnd = pairs("3850,560 3862,510 3880,570 3905,560 3925,500 3945,575 3980,550 4000,575 4030,510 4050,570 4080,560 4100,510 4120,580 4150,560 4170,515 4190,580 4220,560 4245,510 4270,580 4300,560 4320,515 4340,570 4370,560 4390,520 4410,580 4432,520 4445,558 4460,560 4475,548 4520,549 4532,530 4545,550 4586,549");

  const steps: [string, string[]][] = [
    ["#805500", ["10,1064 36,1079 70,1064 124,1079 197,1048 239,1063 249,1048 274,1017 290,1048 365,1017 390,1048 412,1034 436,1017 443,1003 455,1017 556,1048 634,1034 648,1003 678,989 687,958 704,1003 773,972 783,988 832,957 852,943 869,988 900,972 938,926 957,957 1010,943 1033,957 1090,943 1116,972 1236,957 1252,897 1266,943 1300,972 1338,913 1375,926 1402,943 1420,882 1436,926 1450,957 1465,926 1493,897 1502,882 1525,913 1560,913", "3850,778 3862,763 3870,793 3893,718 3910,763 3921,793 3937,718 3955,763 3974,778 3986,733 4000,778 4014,733 4028,778 4060,793 4100,763 4140,808 4180,763 4220,793 4260,763 4300,808 4340,778 4380,793 4425,793 4444,763 4457,778 4476,808 4490,793 4505,778 4522,808 4554,793 4577,808 4586,808"]],
    ["#5a64c8", ["10,1048 130,1034 150,1048 165,1063 193,1034 203,1003 214,1034 249,1048 268,1034 288,1048 329,1003 344,1034 373,1017 402,1034 408,1017 419,989 430,1017 490,1034 650,1017 678,1003 767,972 780,988 806,1003 832,988 850,1003 896,972 917,988 925,1003 947,988 977,972 988,958 1002,972 1012,988 1040,972 1048,988 1210,957 1225,943 1230,957 1240,988 1271,926 1290,972 1311,988 1341,957 1375,972 1390,957 1405,972 1412,943 1421,972 1450,957 1460,972 1486,957 1560,957", "3850,853 3870,883 3920,868 3960,883 4050,898 4068,868 4100,883 4150,868 4180,898 4220,868 4260,883 4300,868 4340,898 4370,868 4400,854 4432,898 4441,882 4456,898 4586,898"]],
    ["#808000", ["10,1140 17,1124 24,1140 113,1124 130,1110 170,1124 193,1110 201,1079 213,1110 230,1094 240,1110 250,1094 329,1079 345,1094 362,1079 383,1063 412,1048 421,1034 432,1048 450,1063 495,1048 576,1063 643,1048 660,1034 688,1003 738,1034 767,1017 773,972 788,1003 806,988 844,1003 930,988 963,957 975,988 984,943 997,972 1060,988 1218,972 1244,943 1262,972 1278,897 1297,957 1311,972 1343,943 1353,913 1371,943 1375,926 1392,957 1403,913 1415,957 1425,926 1445,957 1475,926 1560,926", "3850,793 3870,823 3882,838 3900,808 3930,823 3970,793 4000,823 4060,808 4100,838 4150,823 4200,853 4260,808 4320,838 4380,823 4425,808 4437,853 4445,836 4457,853 4490,853 4510,836 4520,853 4560,836 4575,853 4586,836"]],
    ["#deb887", ["10,1157 18,1169 70,1156 97,1140 106,1156 108,1124 120,1156 198,1140 267,1110 275,1079 284,1110 301,1124 353,1110 362,1079 371,1094 388,1110 412,1094 442,1048 450,1079 484,1094 503,1063 543,1048 543,1079 652,1034 664,1048 676,1063 682,1017 698,1034 712,1048 771,1034 784,1017 800,1034 832,988 841,1017 852,972 869,1017 921,1034 930,972 945,988 963,1003 973,1017 983,1003 1012,972 1018,988 1077,957 1106,972 1139,1003 1218,943 1229,988 1243,926 1252,943 1268,972 1293,943 1298,957 1320,972 1345,957 1412,943 1420,913 1441,957 1455,943 1470,926 1502,913 1520,926 1525,957 1560,957", "3850,823 3866,783 3888,808 3905,763 3930,808 3960,823 3985,778 4010,808 4070,793 4110,838 4160,808 4230,838 4290,793 4340,823 4380,838 4400,823 4435,836 4442,808 4480,851 4494,836 4510,823 4532,836 4560,823 4570,836 4585,823"]],
    ["#3fa63f", ["10,1289 62,1284 220,1281 260,1277 354,1272 466,1267 640,1262 720,1256 854,1251 938,1246 990,1241 1090,1236 1195,1231 1310,1226 1397,1222 1490,1217 1560,1216", "4420,1136 4477,1137 4538,1139 4586,1142"]],
    ["#d21e1e", ["10,1285 162,1281 255,1277 350,1276 460,1272 570,1271 650,1267 703,1265 816,1261 925,1259 1018,1254 1210,1251 1248,1248 1347,1246 1447,1242 1560,1241", "4420,1195 4510,1197 4576,1199 4586,1200"]],
    ["#dede00", ["10,1285 62,1283 137,1279 218,1277 268,1273 302,1271 362,1267 405,1265 432,1261 466,1259 543,1257 594,1253 651,1251 680,1245 752,1241 816,1235 869,1230 920,1227 970,1221 1022,1216 1105,1210 1215,1206 1248,1202 1277,1198 1347,1194 1411,1191 1475,1188 1502,1185 1560,1185", "4420,1104 4494,1107 4555,1109 4586,1112"]],
    ["#00a8b4", ["10,1298 55,1297 97,1292 137,1291 193,1288 248,1283 345,1278 412,1274 436,1268 575,1264 636,1260 672,1255 765,1250 790,1245 862,1240 920,1236 980,1231 1010,1226 1062,1221 1185,1216 1262,1210 1342,1207 1370,1203 1432,1199 1500,1197 1560,1197", "4420,1137 4491,1140 4564,1142 4586,1143", "10,1337 60,1340 1230,1337 1262,1340 1290,1337 1330,1340 4586,1340"]],
  ];
</script>

{#snippet icon(name: string)}
  <svg class="icon" viewBox="0 0 16 16" aria-hidden="true">{@html icons[name]}</svg>
{/snippet}

{#snippet text(label: string)}
  {@const at = label.indexOf("^")}
  {#if at < 0}{label}{:else}{label.slice(0, at)}<u>{label[at + 1]}</u>{label.slice(at + 2)}{/if}
{/snippet}

{#snippet tools(list: string[])}
  {#each list as t}
    {#if t === "|"}
      <span class="sep"></span>
    {:else if t.toLowerCase().endsWith("v") && t.length < 3}
      <button class="drop" class:dim={t === "v"} class:lit={t[0] === "+"} aria-label="more">▼</button>
    {:else}
      {@const name = t.replace("+", "")}
      <button class="tool" class:lit={t[0] === "+"} aria-label={name}>{@render icon(name)}</button>
    {/if}
  {/each}
{/snippet}

{#snippet menu(items: MenuItem[])}
  {#each items as item}
    {#if item}
      <button class="entry" class:active={item.active} disabled={item.off}>
        <span class="gutter" class:on={item.on}>{#if item.icon}{@render icon(item.icon)}{/if}</span>
        <span class="label">{@render text(item.label)}</span>
        {#if item.keys}<span class="keys">{item.keys}</span>{/if}
        {#if item.sub}<span class="arrow">▶</span>{/if}
      </button>
    {:else}
      <hr />
    {/if}
  {/each}
{/snippet}

<div class="app">
  <header class="titlebar">
    {@render icon("app")}
    <h1>WinTAX4 - 4.81.41.00 - SAT - FERRARI - [export_ptyres.wly] - [Export_PTyres.gra]</h1>
    <button aria-label="Minimize"><svg viewBox="0 0 16 16"><path d="M0 8h16" /></svg></button>
    <button aria-label="Restore"><svg viewBox="0 0 16 16"><rect x="1" y="4" width="11" height="11" rx="2" /><path d="M4 1h8q3 0 3 3v8" /></svg></button>
    <button aria-label="Close"><svg viewBox="0 0 16 16"><path d="M1 1l14 14M15 1L1 15" /></svg></button>
  </header>

  <nav class="menubar">
    {@render icon("pulse")}
    {#each mainMenu as m}<button>{@render text(m)}</button>{/each}
    <div class="mdi">
      <button aria-label="Minimize graph"><svg viewBox="0 0 16 16"><path d="M4 12h8" stroke-width="3" /></svg></button>
      <button aria-label="Restore graph"><svg viewBox="0 0 16 16"><path d="M3 7h7v6H3zM3 8h7M6 6V3h7v6h-3M6 4h7" stroke-width="1.500" /></svg></button>
      <button aria-label="Close graph"><svg viewBox="0 0 16 16"><path d="M4 4l8 8M12 4l-8 8" stroke-width="3" /></svg></button>
    </div>
  </nav>

  <section class="laps">
    <span class="marker"></span>
    {#each runCells as [t, w]}<span class="cell" style:width="{w}px">{t}</span>{/each}
    <div class="laplist">
      {#each laps as l, i}<button class:out={i === 0} class:current={i === 5}>{l}</button>{/each}
    </div>
  </section>

  <section class="toolbar">
    <div class="toolset">
      <label class="combo user">
        {@render icon("user")}
        <select aria-label="User layout"><option>296_LV</option></select>
        <span class="down">▼</span>
      </label>
      {@render tools(toolsA)}
      <label class="combo speed">
        <select aria-label="Playback speed"><option>x 1</option></select>
        <span class="down">▼</span>
      </label>
      {@render tools(toolsB)}
      <label class="combo find">
        <select aria-label="Find channel"><option></option></select>
        <span class="down">▼</span>
      </label>
      <span class="sep"></span>
    </div>
  </section>

  <section class="tabs">
    <div class="pager">
      {#each ["M2 2l12 12M14 2L2 14", "M3 2v12M12 3L6 8l6 5", "M11 3L5 8l6 5", "M5 3l6 5-6 5", "M13 2v12M4 3l6 5-6 5"] as d}
        <button aria-label="Page tabs"><svg viewBox="0 0 16 16"><path {d} /></svg></button>
      {/each}
    </div>
    {#each tabs as t}
      <button class="tab" class:driver={t === "Driver"} class:pale={t === "Brakes"} class:plain={t === "Tyres"} class:current={t === "Export_PTyres"}><span>{t}</span></button>
    {/each}
  </section>

  <main class="graph">
    <div class="plot">
      <div class="scroll-x"></div>
      <div class="canvas">
        <svg class="traces" viewBox="0 203 2638 1434">
          <path class="frame" d="M3 1637V204H2638" />
          {#each majors as i}{#if i}<path class="grid" d="M{5 + Math.round(i * 356.3)} 205V1603" />{/if}{/each}
          {#each [343, 483, 623, 763, 903, 1043, 1183, 1323, 1463] as y}<path class="grid" d="M5 {y}H2634" />{/each}
          {#each lapNames as n, i}
            {#if i % 2}<rect x={bounds[i]} y="206" width={bounds[i + 1] - bounds[i]} height="21" fill="#cd853f" />{/if}
            <path class="boundary" d="M{bounds[i]} 228V1602" />
            {#if n}<text class="lap" class:inv={i % 2} x={(bounds[i] + bounds[i + 1]) / 2 - 2} y="223">{n}</text>{/if}
          {/each}
          {#each majors as i}{#if i}<path class="grid" d="M{5 + Math.round(i * 356.3)} 205V228" />{/if}{/each}
          <path d={lapLine} stroke="#3fa63f" />
          <path d={distLine} stroke="#d21e1e" />
          {#each steps as [colour, runs]}{#each runs as r}<path d={step(pairs(r))} stroke={colour} />{/each}{/each}
          <path class="thick" d={line([...speedOut, ...speedLap, ...shift(speedLap, 574)])} stroke="#dede00" />
          <path class="thick" d={line(speedEnd)} stroke="#dede00" />
          <path class="thick" d={line(noisy([...ayOut, ...ayLap, ...shift(ayLap, 574)], 26, 7))} stroke="#e67300" />
          <path class="thick" d={line(noisy([...axOut, ...axLap, ...shift(axLap, 574)], 22, 19))} stroke="#b441ee" />
          <path class="thick" d={line(noisy(ayEnd, 24, 3))} stroke="#e67300" />
          <path class="thick" d={line(noisy(axEnd, 20, 5))} stroke="#b441ee" />
          <path d="M5 1603H2636" stroke="#b441ee" stroke-width="3" />
          <path d="M5 1606H2636" stroke="#fff" />
          {#each minors as i}<path d="M{5 + Math.round(i * 71.26)} 1606v4" stroke="#fff" stroke-width="2" />{/each}
          {#each majors as i}
            <path d="M{5 + Math.round(i * 356.3)} 1606v7" stroke="#fff" stroke-width="2" />
            <text class="axis" x={i ? 2 + Math.round(i * 356.3) : 7} y="1630">{i * 5000}</text>
          {/each}
          <text class="axis start" x="11" y="1592">27503.8</text>
          <text class="axis" x="1632" y="1576">0</text>
          <text class="axis" x="1667" y="1576">0</text>
          <path d="M1624 1580h14l12 20M1644 1592l7 9 2-11" stroke="#0a8cff" stroke-width="5" />
          <path d="M1678 1580h-14l-10 20M1660 1592l-6 9-2-11" stroke="#f00" stroke-width="5" />
          <rect x="1624" y="268" width="18" height="20" fill="#000" />
          <text class="axis" x="1632" y="284">5</text>
          <path d="M1624 288h16l10-16M1644 280l7-10 1 12" stroke="#1e8fe8" stroke-width="4" />
          <text class="axis" x="1667" y="223">6</text>
          <path d="M1678 229h-14l-10 18M1660 240l-7 10v-13" stroke="#f00" stroke-width="4" />
        </svg>
        <div class="scroll-y"></div>
      </div>
    </div>
    <aside class="legend">
      <dl>
        {#each channels as [name, value, colour], i}
          <div style:color={colour}><dt class:lost={i > 15}>{name}</dt><dd>{value}</dd></div>
        {/each}
      </dl>
      <span class="unit">m</span>
    </aside>
  </main>

  <section class="toolbar bottom"><div class="toolset">{@render tools(toolsC)}</div></section>

  <footer class="status"><span>Ready</span><i></i><i class="wide">NUM</i><i class="wide"></i></footer>

  <section class="browser">
    <header>{@render icon("opener")}<h2>Wtx4DataBrowser - 4.81.41.00</h2></header>
    <nav>{#each ["^File", "^Edit", "^View", "^Tools"] as m}<button>{@render text(m)}</button>{/each}</nav>
    <div class="pathbar">
      {#each ["folders", "stop", "winCar"] as t}<button class="tool" aria-label={t}>{@render icon(t)}</button>{/each}
      <span class="sep"></span>
      <label class="path">{@render icon("folderOpen")}<input aria-label="Data path" value="C:\Program Files\WinTAX FERRARI SAT\Data" /></label>
    </div>
    <div class="panes">
      <div class="left">
        <div class="filters">
          <button class="pick" aria-label="Filter"><i></i><b>▼</b></button>
          <button class="dots">...</button>
          <button aria-label="Apply">{@render icon("tick")}</button>
          <button aria-label="Clean">{@render icon("broom")}</button>
          <button aria-label="Clear">{@render icon("bigX")}</button>
        </div>
        <ul class="tree">
          {#each sessions as s}
            <li><button class="plus" aria-label="Expand {s}"><svg viewBox="0 0 15 15"><path d="M3 7.500h9M7.500 3v9" /></svg></button>{@render icon("folder")}<span class:picked={s === "QLY2"}>{s}</span></li>
          {/each}
        </ul>
        <table class="files">
          <thead><tr><th>Track</th><th>Session</th></tr></thead>
          <tbody>
            {#each [0, 1] as r}<tr class:first={r === 0}><td><div>{@render icon("loaded")}260718-RD05...</div></td><td>QLY2</td></tr>{/each}
          </tbody>
        </table>
        <div class="hscroll"><i></i></div>
      </div>
      <div class="right">
        <table class="runs">
          <thead>
            <tr><th class="c-mark"></th><th class="c-box"><i class="green"></i></th><th class="c-box"><i class="red"></i></th><th class="c-col">Start Time</th><th class="c-col"><div>Track Run<b>▲</b></div></th><th>Track Lap</th></tr>
          </thead>
          <tbody>
            {#each rows as r, i}
              <tr class:best={bestRows.includes(i)} class:sel={i > 4} class:focus={i === 9} class:rule={i === 0 || i === 4}>
                <td class="mark"><div><i class:loaded={i > 4}></i>{#if bestRows.includes(i)}{@render icon(i > 4 ? "cupBlue" : "cupGrey")}{/if}</div></td>
                <td class="box"><input type="checkbox" aria-label="Load lap {r[2]} of run {r[1]}" checked={i > 4} /></td>
                <td class="box"><input type="checkbox" aria-label="Compare lap {r[2]} of run {r[1]}" /></td>
                <td>{r[0]}</td><td class="run">{r[1]}</td><td>{r[2]}</td>
              </tr>
            {/each}
          </tbody>
        </table>
        <div class="hscroll long"><i></i></div>
      </div>
    </div>
    <div class="strip">{#each footCells as [t, w]}<span class="cell" style:width="{w}px">{t}</span>{/each}</div>
    <footer><span>Export Csv</span><span class="info">Info: ...</span></footer>
  </section>

  <div class="menu context">{@render menu(context)}</div>
  <div class="menu submenu">{@render menu(exports)}</div>
</div>

<style>
  :global(body) {
    margin: 0;
  }
  .app {
    position: relative;
    display: flex;
    flex-direction: column;
    height: 100vh;
    overflow: hidden;
    background: #f0f0f0;
    color: #111;
    font-family: "DejaVu Sans Condensed", "Noto Sans", sans-serif;
    font-size: 18px;
  }
  button,
  input,
  select {
    margin: 0;
    padding: 0;
    border: 0;
    background: none;
    color: inherit;
    font: inherit;
  }
  u {
    text-underline-offset: 3px;
    text-decoration-thickness: 2px;
  }
  .icon {
    display: block;
    flex: none;
    width: 28px;
    height: 28px;
  }

  .titlebar {
    display: flex;
    flex: none;
    align-items: center;
    height: 38px;
    background: #f3f3f3;
    color: #8a8a8a;
  }
  .titlebar h1 {
    flex: 1;
    margin: 0 0 0 10px;
    font: 400 20px "Open Sans", sans-serif;
  }
  .titlebar button {
    width: 81px;
  }
  .titlebar svg:not(.icon) {
    width: 16px;
    height: 16px;
    fill: none;
    stroke: #888;
  }
  .menubar {
    display: flex;
    flex: none;
    align-items: center;
    height: 35px;
    padding-left: 4px;
    background: #f7f7f7;
    border-bottom: 2px solid #a9a9a9;
  }
  .menubar > button {
    margin-left: 16px;
    padding: 0 12px;
  }
  .menubar > button:first-of-type {
    margin-left: 4px;
  }
  .mdi {
    display: flex;
    gap: 2px;
    margin-left: auto;
  }
  .mdi button {
    width: 31px;
    height: 31px;
    border-radius: 3px;
    background: #e5e5e5;
  }
  .mdi svg {
    width: 20px;
    height: 20px;
    fill: none;
    stroke: #8fa0b4;
  }

  .laps {
    display: flex;
    flex: none;
    align-items: center;
    gap: 2px;
    height: 33px;
    padding: 2px 0 0 15px;
    box-sizing: border-box;
    height: 35px;
    overflow: hidden;
    background: linear-gradient(#fff 20%, #dcdcdc);
    border-bottom: 2px solid #a9a9a9;
    font-size: 17px;
  }
  .marker {
    box-sizing: border-box;
    width: 20px;
    height: 19px;
    border: 2px solid #888;
    outline: 1px solid #fff;
    outline-offset: -3px;
    background: #4cae46;
  }
  .cell {
    box-sizing: border-box;
    flex: none;
    height: 20px;
    padding-left: 5px;
    overflow: hidden;
    background: #4cae46;
    line-height: 20px;
    white-space: nowrap;
  }
  .laplist {
    display: flex;
    flex: 1;
    height: 20px;
    margin-right: -9px;
    border-top: 1px solid #888;
  }
  .laplist button {
    box-sizing: border-box;
    flex: 1;
    border: solid #00f010;
    border-width: 2px 1px;
    background: #fff;
    line-height: 16px;
  }
  .laplist .out {
    border-color: #8b4513;
    border-width: 2px;
  }
  .laplist .current {
    border: 2px solid #1010e0;
    background: #cd853f;
    font-weight: 700;
  }

  .toolbar {
    display: flex;
    flex: none;
    height: 44px;
    background: #fff;
  }
  .toolset {
    display: flex;
    align-items: center;
    background: linear-gradient(#fafafa, #d2d2d2);
  }
  .toolbar:not(.bottom) .toolset {
    padding: 0 88px 0 10px;
  }
  .tool {
    display: flex;
    flex: none;
    align-items: center;
    justify-content: center;
    width: 40px;
    height: 38px;
  }
  .sep {
    flex: none;
    box-sizing: border-box;
    width: 15px;
    height: 31px;
    border-right: 6px solid transparent;
    border-left: 7px solid transparent;
    background: #a0a0a0;
    background-clip: padding-box;
  }
  .drop {
    width: 27px;
    height: 38px;
    font-size: 12px;
  }
  .drop.dim {
    color: #777;
  }
  .tool.lit,
  .drop.lit {
    background: #b5d7f3;
    box-shadow: inset 0 0 0 2px #1883d7;
  }
  .combo {
    box-sizing: border-box;
    display: flex;
    align-items: center;
    height: 40px;
    border: 3px solid #8a8a8a;
    border-right-color: #eee;
    border-bottom-color: #eee;
    background: #fff;
  }
  .combo .icon {
    margin-left: 4px;
  }
  .combo select {
    flex: 1;
    min-width: 0;
    padding-left: 7px;
    appearance: none;
    font-size: 20px;
  }
  .down {
    width: 25px;
    background: #f0f0f0;
    border: 1px solid #999;
    font-size: 16px;
    line-height: 32px;
    text-align: center;
  }
  .combo.user { width: 334px; }
  .combo.speed { width: 102px; }
  .combo.find { width: 330px; }
  .toolbar.bottom {
    border-top: 1px solid #999;
    border-bottom: 2px solid #aaa;
    height: 42px;
    margin-bottom: 4px;
  }
  .toolbar.bottom .toolset {
    padding: 0 0 0 10px;
    border-right: 2px solid #999;
  }

  .tabs {
    display: flex;
    flex: none;
    height: 34px;
    background: linear-gradient(#f0f0f0 28px, #e8f4fb 28px);
    border-bottom: 1px solid #444;
  }
  .pager {
    display: flex;
    flex: none;
    margin-right: 12px;
    border: solid #111;
    border-width: 2px 2px 2px 0;
    background: #777;
    gap: 2px;
  }
  .pager button {
    width: 28px;
    background: #f0f0f0;
    box-shadow: inset -2px -2px #bbb, inset 2px 2px #fff;
  }
  .pager svg {
    width: 16px;
    height: 16px;
    fill: none;
    stroke: #000;
    stroke-width: 3;
    vertical-align: middle;
  }
  .tab {
    --fill: linear-gradient(#eef6ff, #c3d9f4);
    position: relative;
    flex: none;
    height: 28px;
    padding: 3px 13px 0 14px;
  }
  .tab::before {
    content: "";
    position: absolute;
    inset: 0 -6px 0 -3px;
    border-top: 2px solid #999;
    background: var(--fill);
    clip-path: polygon(10px 0, calc(100% - 14px) 0, 100% 100%, 0 100%);
  }
  .tab::after {
    content: "";
    position: absolute;
    top: 1px;
    right: 0;
    height: 26px;
    border-right: 2px dotted #557c9c;
    transform: skewX(22deg);
  }
  .tab span {
    position: relative;
  }
  .tab.driver { --fill: #ffff50; }
  .tab.pale { --fill: #ecfaff; }
  .tab.plain { --fill: #ececec; }
  .tab.current { --fill: #eaf6fe; font-weight: 700; }

  .graph {
    display: grid;
    grid-template-columns: minmax(0, 1fr) 224px;
    flex: 1;
    min-height: 0;
    align-items: start;
    padding-top: 1px;
    background: #000;
  }
  .scroll-x {
    height: 10px;
    margin: 0 13px 0 3px;
    border: solid #aaa;
    border-width: 1px 1px 2px;
    background: #3366ff;
  }
  .canvas {
    display: flex;
  }
  .traces {
    flex: 1;
    min-width: 0;
    fill: none;
    stroke-width: 2;
  }
  .traces .frame { stroke: #9a9a9a; }
  .traces .grid { stroke: #2b2b2b; }
  .traces .boundary { stroke: #cd853f; stroke-dasharray: 30 11; }
  .traces .thick { stroke-width: 3; }
  .traces text {
    fill: #fff;
    font-size: 18px;
    text-anchor: middle;
  }
  .traces .start { text-anchor: start; }
  .traces .lap { fill: #cd853f; }
  .traces .inv { fill: #222; }
  .scroll-y {
    width: 9px;
    margin-bottom: 32px;
    border: 2px solid #bbb;
    background: #3366ff;
  }
  .legend {
    display: flex;
    flex-direction: column;
    justify-content: space-between;
    height: 100%;
  }
  .legend dl {
    margin: 13px 5px 0 0;
    text-align: right;
  }
  .legend dl div {
    margin-bottom: 21px;
    line-height: 28px;
  }
  .legend dt {
    padding-right: 3px;
    font-size: 19px;
  }
  .legend dd {
    margin: 0;
  }
  .legend .lost {
    font-style: italic;
    text-decoration: line-through;
  }
  .unit {
    margin-left: -11px;
    color: #fff;
    line-height: 26px;
  }

  .status {
    display: flex;
    flex: none;
    height: 23px;
    overflow: hidden;
    border-top: 2px solid #fff;
    font-size: 19px;
    line-height: 28px;
  }
  .status span {
    flex: 1;
    padding-left: 2px;
  }
  .status i {
    box-sizing: border-box;
    width: 48px;
    margin-right: 6px;
    padding-left: 4px;
    border: 2px solid #aaa;
    border-right-color: #fff;
    border-bottom: 0;
    font-style: normal;
    line-height: 24px;
  }
  .status .wide {
    width: 56px;
  }
  .status .wide:last-child {
    margin-right: 0;
  }

  .browser {
    position: absolute;
    top: 316px;
    left: 889px;
    box-sizing: border-box;
    display: flex;
    flex-direction: column;
    width: 1000px;
    height: 1143px;
    overflow: hidden;
    border: 2px solid #0063b1;
    border-radius: 14px;
    background: #f0f0f0;
  }
  .browser > header {
    display: flex;
    flex: none;
    align-items: center;
    gap: 10px;
    height: 54px;
    padding-left: 13px;
    background: #0063b1;
    color: #fff;
  }
  .browser h2 {
    margin: 0;
    font: 400 20px "Open Sans", sans-serif;
  }
  .browser nav {
    flex: none;
    height: 36px;
    padding-left: 3px;
    background: #f7f7f7;
    border-bottom: 2px solid #b0b0b0;
  }
  .browser nav button {
    margin-right: 16px;
    padding: 0 12px;
    line-height: 36px;
  }
  .pathbar {
    display: flex;
    flex: none;
    align-items: center;
    height: 44px;
    padding-left: 12px;
    background: linear-gradient(#fdfdfd, #d8d8d8);
  }
  .path {
    display: flex;
    flex: 1;
    align-items: center;
    height: 38px;
    border-top: 3px solid #8a8a8a;
    border-left: 3px solid #8a8a8a;
    background: #fff;
  }
  .path input {
    flex: 1;
    padding-left: 8px;
    font-size: 21px;
  }
  .panes {
    display: flex;
    flex: 1;
    min-height: 0;
  }
  .left,
  .right {
    display: flex;
    flex-direction: column;
    border: 2px solid #777;
    background: #fff;
  }
  .left {
    width: 247px;
    margin: 0 7px 0 3px;
  }
  .right {
    flex: 1;
  }
  .filters {
    display: flex;
    gap: 8px;
    padding: 5px 3px;
    background: #f0f0f0;
  }
  .filters button {
    box-sizing: border-box;
    display: flex;
    align-items: center;
    justify-content: center;
    width: 41px;
    height: 40px;
    border: 2px solid #777;
    background: #f3f3f3;
  }
  .filters .pick {
    height: 34px;
    margin-top: 4px;
    border-style: inset;
  }
  .pick i {
    width: 6px;
    height: 24px;
    margin-right: 4px;
    background: #1090e8;
  }
  .pick b {
    font-size: 14px;
  }
  .filters .dots {
    border-width: 3px;
  }
  .tree {
    margin: 0;
    padding: 0 0 0 10px;
    list-style: none;
    font-size: 21px;
  }
  .tree li {
    position: relative;
    display: flex;
    align-items: center;
    height: 31px;
  }
  .tree li:nth-child(odd) {
    height: 32px;
  }
  .tree li::before {
    content: "";
    position: absolute;
    top: 0;
    bottom: 0;
    left: 7px;
    border-left: 2px dotted #999;
  }
  .plus {
    position: relative;
    display: flex;
    width: 15px;
    height: 15px;
    margin-right: 11px;
    border: 1px solid #777;
    background: #fff;
  }
  .plus svg {
    stroke: #000;
    stroke-width: 2;
  }
  .tree span {
    margin-left: 6px;
    padding: 0 3px;
    line-height: 30px;
  }
  .picked {
    background: #f0f0f0;
  }
  table {
    border-collapse: collapse;
    table-layout: fixed;
    width: 100%;
  }
  th {
    height: 32px;
    padding: 0 0 0 11px;
    overflow: hidden;
    border-right: 2px solid #999;
    border-bottom: 2px solid #777;
    background: #f0f0f0;
    font-size: 20px;
    font-weight: 400;
    text-align: left;
    white-space: nowrap;
  }
  td {
    padding: 0;
    white-space: nowrap;
  }
  .files {
    margin-top: 6px;
    border-top: 1px solid #777;
    font-size: 19px;
  }
  .files th:first-child {
    width: 163px;
  }
  .files td {
    height: 30px;
    overflow: hidden;
  }
  .files td:last-child {
    padding-left: 11px;
  }
  .files .first {
    background: #efefef;
  }
  .files td div {
    display: flex;
    align-items: center;
    gap: 3px;
    padding-left: 3px;
  }
  .hscroll {
    height: 29px;
    margin-top: auto;
    background: #f0f0f0;
  }
  .hscroll i {
    display: block;
    width: 52px;
    height: 4px;
    margin: 13px 0 0 30px;
    background: #888;
  }
  .hscroll.long i {
    width: 700px;
  }
  .runs .c-mark { width: 84px; }
  .runs .c-box { width: 32px; padding: 0; }
  .runs .c-col { width: 162px; }
  .runs th {
    height: 34px;
    padding-left: 10px;
  }
  .runs th i {
    display: block;
    width: 25px;
    height: 24px;
    margin: auto;
  }
  .runs th .green { background: #4cae46; }
  .runs th .red { background: #d21e1e; }
  .runs th div {
    display: flex;
    justify-content: space-between;
    padding-right: 6px;
  }
  .runs th b {
    color: #666;
    font-size: 18px;
  }
  .runs tbody td {
    height: 31px;
    padding-left: 12px;
  }
  .runs tbody tr:nth-child(even) td {
    height: 32px;
  }
  .runs tbody .rule td {
    height: 30px;
  }
  .runs tbody .focus td {
    height: 30px;
  }
  .runs tbody .box {
    padding: 0;
    text-align: center;
  }
  .runs tbody .run {
    padding-left: 14px;
  }
  .runs input {
    position: relative;
    box-sizing: border-box;
    width: 25px;
    height: 25px;
    appearance: none;
    background: #fff;
    border: 2px solid #777;
    border-right-color: #ddd;
    border-bottom-color: #ddd;
    vertical-align: middle;
  }
  .runs input:checked::before {
    content: "";
    position: absolute;
    inset: 4px;
    background: #000;
    clip-path: polygon(0 40%, 35% 65%, 100% 0, 100% 35%, 35% 100%, 0 70%);
  }
  .runs tbody .mark {
    padding-left: 5px;
  }
  .mark div {
    display: flex;
    align-items: center;
    gap: 14px;
    height: 30px;
  }
  .mark i {
    align-self: flex-end;
    width: 12px;
    height: 12px;
    margin-bottom: 3px;
    background: #fbc02d;
  }
  .mark i.loaded {
    background: repeating-conic-gradient(#3d8f78 0 25%, #7db0a0 0 50%) 0 0 / 4px 4px;
  }
  .best {
    font-weight: 700;
  }
  .rule td {
    border-bottom: 2px solid #b0b0b0;
  }
  .sel td:not(.mark) {
    background: #0078d7;
    color: #d9ebfa;
  }
  .sel .mark {
    background: linear-gradient(90deg, #fff 88px, #0078d7 88px);
  }
  .best.sel td {
    color: #fff;
  }
  .focus td:not(.mark) {
    border-top: 1px dotted #e09a50;
    border-bottom: 1px dotted #e09a50;
  }
  .strip {
    display: flex;
    flex: none;
    align-items: center;
    gap: 2px;
    height: 40px;
    padding-left: 12px;
    background: linear-gradient(#fff, #dadada);
    border-bottom: 2px solid #aaa;
  }
  .strip .cell {
    height: 25px;
    line-height: 25px;
    font-size: 17px;
  }
  .browser > footer {
    display: flex;
    flex: none;
    height: 36px;
    padding-left: 3px;
    font-size: 19px;
    line-height: 38px;
  }
  .browser > footer span {
    flex: none;
    width: 730px;
  }
  .browser > footer .info {
    margin-top: 5px;
    padding-left: 3px;
    border: 2px solid #aaa;
    line-height: 30px;
  }

  .menu {
    position: absolute;
    box-sizing: border-box;
    padding: 3px;
    border: 2px solid #a3a3a3;
    background: linear-gradient(90deg, #f4f4f4 4px, #d9d9d9 41px, #f0f0f0 41px);
    box-shadow: 5px 5px 6px #0006;
  }
  .context {
    top: 120px;
    left: 1798px;
    width: 415px;
    padding-top: 1px;
  }
  .submenu {
    top: 1117px;
    left: 2202px;
    width: 340px;
    padding-top: 4px;
  }
  .entry {
    box-sizing: border-box;
    display: flex;
    align-items: center;
    width: 100%;
    height: 39px;
  }
  .entry:disabled {
    color: #8a8a8a;
  }
  .entry.active {
    background: linear-gradient(#f6fbff, #b5d6f2);
    box-shadow: inset 0 0 0 2px #1883d7;
  }
  .gutter {
    display: flex;
    flex: none;
    align-items: center;
    justify-content: center;
    width: 35px;
    height: 35px;
  }
  .gutter.on {
    background: #b3d7f3;
    box-shadow: inset 0 0 0 1px #90c0e8;
  }
  .label {
    margin-left: 14px;
  }
  .keys {
    margin-left: auto;
    padding-right: 28px;
  }
  .arrow {
    margin-left: auto;
    padding-right: 10px;
    font-size: 18px;
  }
  .entry.active .arrow {
    color: #fff;
  }
  .menu hr {
    height: 2px;
    margin: 4px 0 5px 53px;
    border: 0;
    background: #a3a3a3;
  }
</style>
